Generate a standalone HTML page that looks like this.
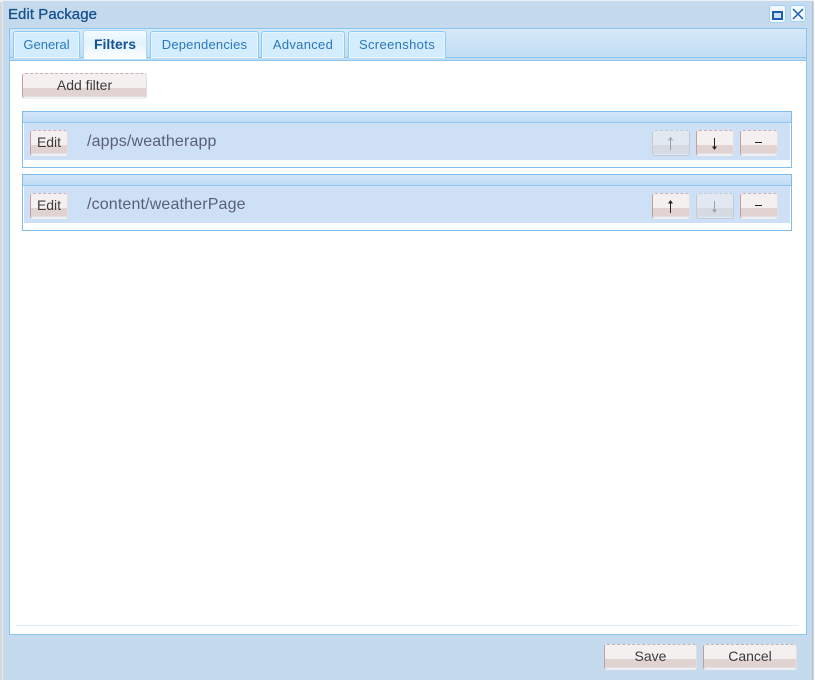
<!DOCTYPE html>
<html><head><meta charset="utf-8"><title>Edit Package</title>
<style>
html,body{margin:0;padding:0;width:815px;height:680px;overflow:hidden;background:#fff;font-family:"Liberation Sans",sans-serif}
div,span{position:absolute;box-sizing:border-box}
.tab{top:31px;height:27px;border:1px solid #8ccbf5;border-bottom:none;border-radius:3px 3px 0 0;background:#d3ecfe;box-shadow:inset 0 0 0 1px #e8f6ff;color:#2b78bb;font-size:13px;letter-spacing:.2px;line-height:25px;text-align:center;white-space:nowrap}
.tab.on{top:30px;height:29px;background:linear-gradient(#f4fbff,#e2f3fe 45%,#fff);color:#15508f;font-weight:bold;font-size:14px;letter-spacing:0;line-height:27px;box-shadow:none;z-index:2;border-color:#a6d8f8}
.btn{height:26px;border-radius:3px;background:linear-gradient(#f5f0f0 0,#f5f0f0 58%,#e2d3d3 58%,#e2d3d3 94%,#dfe8f2 94%,#e6ecf3 98%,#f6f4f5 98%);border-left:1px solid #c49e9e;border-top:1px dashed #c9b0b4;border-right:1px solid #e4dede;border-bottom:1px solid #f3eeee;color:#3c3c3c;font-size:14px;line-height:22px;text-align:center;white-space:nowrap}
.btn.d{background:linear-gradient(#e2e8f1 0,#e2e8f1 58%,#d6dbe2 58%,#d6dbe2 94%,#d2e2f3 94%,#d8e4f2 98%,#e8edf4 98%);border-color:#c4c9d2;color:#888}
.pan{left:22px;width:770px;height:57px;border:1px solid #7fbcec;background:#fff}
.hd{left:0;top:0;width:768px;height:11px;background:linear-gradient(#d3e6f8,#bfdcf4);border-bottom:1px solid #8fc6ef}
.row{left:1px;top:11px;width:766px;height:37px;background:#cde0f5}
.path{left:64px;top:20px;color:#5a5f78;font-size:16px;letter-spacing:.15px;line-height:20px;white-space:nowrap}
svg{position:absolute}
</style></head><body>
<div style="left:0;top:0;width:815px;height:680px;background:#d8d8d8"></div>
<div style="left:0;top:0;width:815px;height:2px;background:#eef1f4"></div>
<div style="left:2px;top:1px;width:811px;height:679px;background:#c5dbed;border-left:1px solid #dfeaf3;border-right:1px solid #a9c4da"></div>
<div style="left:814px;top:0;width:1px;height:680px;background:#f4f6f8"></div>
<div style="left:8px;top:6px;color:#15508f;font-size:15px;letter-spacing:.05px;line-height:18px;-webkit-text-stroke:.3px #15508f;white-space:nowrap">Edit Package</div>

<div style="left:769px;top:5px;width:17px;height:18px;background:#f3f9fe;border:1px solid #9dd2f7;border-radius:3px"></div>
<div style="left:772px;top:11px;width:11px;height:9px;border:2px solid #1a5eb0;background:#cfe0f2"></div>
<div style="left:790px;top:5px;width:16px;height:17px;background:#f3f9fe;border:1px solid #9dd2f7;border-radius:3px"></div>
<svg style="left:790px;top:5px" width="16" height="17"><path d="M3 4L13 14M13 4L3 14" stroke="#1a5eb0" stroke-width="1.500" fill="none"/></svg>

<div style="left:9px;top:28px;width:798px;height:33px;border:1px solid #8cc6f0;background:linear-gradient(#d6e9f9,#bedcf3)"></div>
<div style="left:10px;top:57px;width:796px;height:1px;background:#8cc6f0"></div>
<div class="tab" style="left:13px;width:67px;letter-spacing:0">General</div>
<div class="tab on" style="left:83px;width:64px">Filters</div>
<div class="tab" style="left:150px;width:109px">Dependencies</div>
<div class="tab" style="left:261px;width:84px;letter-spacing:.3px">Advanced</div>
<div class="tab" style="left:348px;width:98px;letter-spacing:.35px">Screenshots</div>

<div style="left:9px;top:60px;width:798px;height:575px;border:1px solid #8cc6f0;background:#fff"></div>
<div style="left:16px;top:625px;width:782px;height:1px;background:#e2ecf4"></div>

<div class="btn" style="left:22px;top:73px;width:125px">Add filter</div>

<div class="pan" style="top:111px"><div class="row"></div><div class="hd"></div><div class="path">/apps/weatherapp</div></div>
<div class="btn" style="left:30px;top:130px;width:38px">Edit</div>
<div class="btn d" style="left:652px;top:130px;width:38px"></div>
<svg style="left:652px;top:130px" width="38" height="26"><path d="M18.500 20V8M16.500 10.500L18.500 7.500L20.500 10.500" stroke="#9aa0a8" stroke-width="1" fill="none"/></svg>
<div class="btn" style="left:696px;top:130px;width:38px"></div>
<svg style="left:696px;top:130px" width="38" height="26"><path d="M18.500 8V18" stroke="#222" stroke-width="1" fill="none"/><path d="M16 16.500H21L18.500 20Z" fill="#222"/></svg>
<div class="btn" style="left:740px;top:130px;width:38px"></div>
<div style="left:755px;top:142px;width:7px;height:1px;background:#222"></div>

<div class="pan" style="top:174px"><div class="row"></div><div class="hd"></div><div class="path">/content/weatherPage</div></div>
<div class="btn" style="left:30px;top:193px;width:38px">Edit</div>
<div class="btn" style="left:652px;top:193px;width:38px"></div>
<svg style="left:652px;top:193px" width="38" height="26"><path d="M18.500 20V8" stroke="#222" stroke-width="1" fill="none"/><path d="M16 10.500H21L18.500 7Z" fill="#222"/></svg>
<div class="btn d" style="left:696px;top:193px;width:38px"></div>
<svg style="left:696px;top:193px" width="38" height="26"><path d="M18.500 8V18" stroke="#9aa0a8" stroke-width="1" fill="none"/><path d="M16 16.500H21L18.500 20Z" fill="#9aa0a8"/></svg>
<div class="btn" style="left:740px;top:193px;width:38px"></div>
<div style="left:755px;top:205px;width:7px;height:1px;background:#222"></div>

<div class="btn" style="left:604px;top:644px;width:93px">Save</div>
<div class="btn" style="left:703px;top:644px;width:94px">Cancel</div>
</body></html>
